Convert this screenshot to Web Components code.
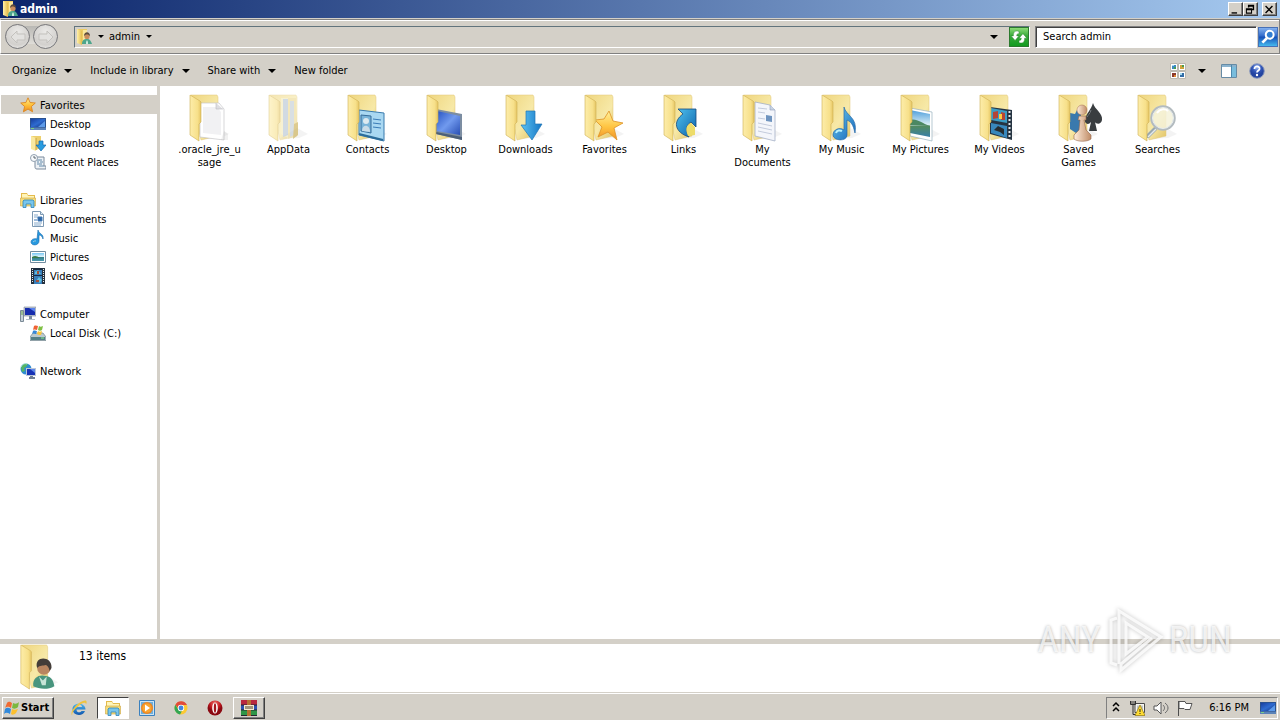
<!DOCTYPE html>
<html lang="en">
<head>
<meta charset="utf-8">
<title>admin</title>
<style>
  html, body { height: 100%; }
  body {
    margin: 0;
    overflow: hidden;
    font: 11px/13px "DejaVu Sans Condensed", "Noto Sans", sans-serif;
    color: #000;
    --face: #d4d0c8;
    --shade: #808080;
    --edge: #404040;
  }
</style>
</head>
<body>
<desktop-screen>
  <title-bar slot="window" icon="user">admin</title-bar>
  <address-bar slot="window" path="admin"></address-bar>
  <command-bar slot="window">
    <command-button menu>Organize</command-button>
    <command-button menu>Include in library</command-button>
    <command-button menu>Share with</command-button>
    <command-button>New folder</command-button>
  </command-bar>
  <explorer-body slot="window">
    <nav-group slot="nav">
      <nav-item icon="star" selected>Favorites</nav-item>
      <nav-item icon="desktop" child>Desktop</nav-item>
      <nav-item icon="downloads" child>Downloads</nav-item>
      <nav-item icon="recent" child>Recent Places</nav-item>
    </nav-group>
    <nav-group slot="nav">
      <nav-item icon="libraries">Libraries</nav-item>
      <nav-item icon="document" child>Documents</nav-item>
      <nav-item icon="music" child>Music</nav-item>
      <nav-item icon="picture" child>Pictures</nav-item>
      <nav-item icon="video" child>Videos</nav-item>
    </nav-group>
    <nav-group slot="nav">
      <nav-item icon="computer">Computer</nav-item>
      <nav-item icon="disk" child>Local Disk (C:)</nav-item>
    </nav-group>
    <nav-group slot="nav">
      <nav-item icon="network">Network</nav-item>
    </nav-group>
    <file-item kind="page">.oracle_jre_u<wbr>sage</file-item>
    <file-item kind="appdata">AppData</file-item>
    <file-item kind="contacts">Contacts</file-item>
    <file-item kind="desktop">Desktop</file-item>
    <file-item kind="downloads">Downloads</file-item>
    <file-item kind="favorites">Favorites</file-item>
    <file-item kind="links">Links</file-item>
    <file-item kind="documents">My Documents</file-item>
    <file-item kind="music">My Music</file-item>
    <file-item kind="pictures">My Pictures</file-item>
    <file-item kind="videos">My Videos</file-item>
    <file-item kind="games">Saved Games</file-item>
    <file-item kind="searches">Searches</file-item>
  </explorer-body>
  <details-pane slot="window">13 items</details-pane>
  <task-bar slot="taskbar">
    <task-button icon="ie" label="Internet Explorer"></task-button>
    <task-button icon="libraries" label="Windows Explorer" state="active"></task-button>
    <task-button icon="player" label="Media Player"></task-button>
    <task-button icon="chrome" label="Chrome"></task-button>
    <task-button icon="opera" label="Opera"></task-button>
    <task-button icon="winrar" label="WinRAR" state="open"></task-button>
    <system-tray slot="tray">6:16 PM</system-tray>
  </task-bar>
  <water-mark slot="overlay"></water-mark>
</desktop-screen>

<script>
// Small 16x16 icons
const ICONS = {
  user: `<linearGradient id="g"><stop stop-color="#fff0a8"/><stop offset="1" stop-color="#e2bb4c"/></linearGradient>
    <path d="M1 0h10v13l-5 2-5-2z" fill="#eccb62"/><path d="M1 0l5 2v14l-5-2z" fill="url(#g)"/><path d="M7 1h4v11H7z" fill="#f9e79c"/>
    <path d="M6 15c0-4 2-5 5-5s4 2 5 5z" fill="#4da58c"/><path d="M10 11l1 2 1-2v4h-2z" fill="#c9ebdc"/><circle cx="11" cy="7.500" r="2.600" fill="#c98d5e"/><path d="M8 7c0-5 6-5 6 0l-2-1.500-2 0z" fill="#5b4a3c"/>`,
  star: `<linearGradient id="g" x2="0" y2="1"><stop stop-color="#fff3a0"/><stop offset=".5" stop-color="#ffc33c"/><stop offset="1" stop-color="#ef8a1c"/></linearGradient>
    <path d="M8 .8l2.100 4.700 5.200.5-3.900 3.500 1.200 5.300L8 12.100l-4.600 2.700 1.200-5.300L.7 6l5.200-.5z" fill="url(#g)" stroke="#dc861e" stroke-width=".9"/>`,
  desktop: `<linearGradient id="g" x2="1" y2="1"><stop stop-color="#183f9f"/><stop offset=".5" stop-color="#2e6bd0"/><stop offset="1" stop-color="#12307c"/></linearGradient>
    <path d="M0 2h16v12H0z" fill="#29518f"/><path d="M1 3h14v8H1z" fill="url(#g)"/><path d="M8 11l7-6v6z" fill="#5d9bea"/><path d="M0 11.500h16V14H0z" fill="#5b83b8"/><path d="M1 12h3v1H1z" fill="#7bd085"/>`,
  downloads: `<path d="M1 1h10v12l-5 2-5-2z" fill="#edd06e"/><path d="M1 1l5 2v13l-5-2z" fill="#fae9a0"/><path d="M6 3v12" stroke="#c89f3e"/>
    <path d="M9 6h4v4h3l-5 6-5-6h3z" fill="#299ce0" stroke="#1968ae" stroke-width=".7"/>`,
  recent: `<path d="M5 3h9v9h2v3H7c-2 0-2-1-2-3z" fill="#edf1f5" stroke="#7b8a9c"/><path d="M7 6h5M7 8h2m1 0h3M7 10h5M9 12h5" stroke="#638aaa"/>
    <circle cx="4" cy="4" r="3.500" fill="#f7f9fb" stroke="#91a0af"/><path d="M4 2v2h2" fill="none" stroke="#59656f"/>`,
  libraries: `<path d="M1 1h6l1 2h7v11H1z" fill="#e4bb4d"/><path d="M2 2h5l1 2h6v4H2z" fill="#fff5b9"/><path d="M.5 6h15v8H.5z" fill="#f6dc78" stroke="#cda542" stroke-width=".6"/>
    <path d="M3 15.500V9l1-1h9l1 1v6.500h-3V12H6v3.500z" fill="#79c6ec" stroke="#3184b8" stroke-width=".8"/>`,
  document: `<path d="M2.500.5h8l3 3v12h-11z" fill="#fff" stroke="#7d99b3"/><path d="M10.500.5v3h3" fill="#dce9f4" stroke="#7d99b3"/><path d="M4 4h4M4 6h4M4 12h8M4 14h7" stroke="#86a9ca"/><path d="M4 9h3M8 6h4v4H8z" stroke="#3a74b4" fill="#2f66a3"/>`,
  music: `<path d="M8 0c1 4 6 4 5 9-1-3-2-4-4-4v6c0 5-8 5-8 1 0-3 4-4 6-3z" fill="#2799df" stroke="#176aad" stroke-width=".6"/><path d="M3 12c1-1 2-1 3-1" stroke="#a5e0fb"/>`,
  picture: `<linearGradient id="g" x2="0" y2="1"><stop stop-color="#76c7f4"/><stop offset=".5" stop-color="#e9f7fb"/><stop offset=".51" stop-color="#317d83"/><stop offset="1" stop-color="#4b9ab3"/></linearGradient>
    <path d="M.5 2.500h15v11H.5z" fill="#fff" stroke="#728da0"/><path d="M2 4h12v8H2z" fill="url(#g)"/><path d="M2 8c3-2 5-1 8 1H2z" fill="#397a48"/>`,
  video: `<path d="M1 0h14v16H1z" fill="#25313d"/><path d="M4 0h8v16H4z" fill="#397eba"/><path d="M4 0h8v2H4zM4 7h8v1H4z" fill="#182c41"/><path d="M5 4l3-2 3 4H5zM6 13l3-4 3 3-2 3z" fill="#5dc0df"/><path d="M7 3h2v3H7zM6 12h3v2H6z" fill="#a3523b"/>
    <path d="M2.500 1v14M13.500 1v14" stroke="#e3edf3" stroke-dasharray="1 1"/>`,
  computer: `<path d="M.5 4.500h3v11h-3z" fill="#c6d1d9" stroke="#7b8a96"/><path d="M1 6h2M1 8h2" stroke="#68a74a"/><path d="M4 1h12v9H4z" fill="#c2cbd5" stroke="#7c8899" stroke-width=".6"/><path d="M5 2h10v7H5z" fill="#172dad"/><path d="M9 2h6v4z" fill="#5b83ed"/><path d="M9 10h3v3H9z" fill="#7b8ba0"/><path d="M6 13h9v1H6z" fill="#b5c0cb"/>`,
  disk: `<path d="M3 8h10l3 4v3.500H0V12z" fill="#bbc9cf" stroke="#71858e" stroke-width=".7"/><path d="M1 12h14v3H1z" fill="#557f86"/><path d="M11 13h3" stroke="#86eb8b"/>
    <path d="M4 1c2-1 3 0 4 0L7 5C6 5 5 4 3 5z" fill="#ef6334"/><path d="M9 1c1 1 2 1 4 0l-1 4c-1 1-3 1-4 0z" fill="#7fc044"/><path d="M3 6c1-1 3 0 4 0L6 9c-1 0-3-1-4 0z" fill="#3688d8"/><path d="M8 6c1 1 2 1 4 0l-1 4c-1 0-3 0-4-1z" fill="#fbc438"/>`,
  network: `<circle cx="6" cy="6" r="5.500" fill="#2e8bd2"/><path d="M1 4c2-4 5-4 7-3L6 4 4 5l1 3-3 1zM7 6l4-1-1 4-3 2z" fill="#55b564"/><path d="M1 4c1-3 4-4 6-3" stroke="#b8e8ef" fill="none"/>
    <path d="M6 5h10v8H6z" fill="#bcc7d7"/><path d="M7 6h8v6H7z" fill="#1732b6"/><path d="M10 6h5v4z" fill="#5d87e9"/><path d="M10 13h3v1h2v2H9v-2h1z" fill="#718094"/>`,
  refresh: `<linearGradient id="g" x2="0" y2="1"><stop stop-color="#8cdb77"/><stop offset=".45" stop-color="#37aa38"/><stop offset="1" stop-color="#129b20"/></linearGradient><path d="M0 0h16v16H0z" fill="url(#g)"/>
    <path d="M8 3C4 2 3 4 3 7H1l3.500 4L8 7H6c0-1 0-2 2-2zM8 13c4 1 5-1 5-4h2l-3.500-4L8 9h2c0 1 0 2-2 2z" fill="#fff" stroke="#25802a" stroke-width=".4"/>`,
  search: `<linearGradient id="g" x2="0" y2="1"><stop stop-color="#82b0ef"/><stop offset=".45" stop-color="#2f6acb"/><stop offset=".5" stop-color="#164fb7"/><stop offset="1" stop-color="#45b9ee"/></linearGradient><path d="M0 0h16v16H0z" fill="url(#g)"/>
    <path d="M7 9l-4 4" stroke="#fff" stroke-width="2.500"/><circle cx="9.500" cy="6" r="3.500" fill="#317dd1" stroke="#fff" stroke-width="1.800"/>`,
  views: `<path d="M.5.5h7v7h-7zM8.500.5h7v7h-7zM.5 8.500h7v7h-7zM8.500 8.500h7v7h-7z" fill="#fff" stroke="#bcb8af"/><path d="M2 2h4v4H2z" fill="#3c8bc2"/><path d="M10 2h4v4h-4z" fill="#cfa33b"/><path d="M2 10h4v4H2z" fill="#8b3a2c"/><path d="M10 10h4v4h-4z" fill="#326ca6"/><path d="M4 4h2v2H4zM12 2h2v2h-2z" fill="#4b9d4e"/><path d="M4 12h2v2H4z" fill="#e58b34"/><path d="M2 2h2v1H2zM10 10h2v2h-2z" fill="#a4d8ef"/>`,
  pane: `<path d="M.5 1.500h15v13H.5z" fill="#fff" stroke="#668ba5"/><path d="M1 2h14v2H1z" fill="#8bb3ce"/><path d="M10 4h5v10h-5z" fill="#79bddd"/><path d="M10.500 2v12" stroke="#4c88ad"/>`,
  help: `<radialGradient id="g" cy=".25"><stop stop-color="#a3bff5"/><stop offset=".6" stop-color="#3458b9"/><stop offset="1" stop-color="#2444a0"/></radialGradient><circle cx="8" cy="8" r="7.300" fill="url(#g)" stroke="#8d9bbd"/>
    <path d="M5.500 6c0-4 5.500-3 5 0-.3 1.500-2.500 1.500-2.500 3.500" fill="none" stroke="#fff" stroke-width="1.800"/><circle cx="8" cy="12" r="1.200" fill="#fff"/>`,
  windows: `<path d="M3 3c2-2 3-1 5 0L7 8C5 7 4 6 1 8z" fill="#f06b32"/><path d="M9 3c2 1 4 1 6-1l-1 5c-2 2-4 2-6 1z" fill="#7bb83e"/><path d="M1 9c2-2 4-1 6 0l-1 5c-2-1-4-2-6 0z" fill="#3189db"/><path d="M8 9c2 1 3 1 6 0l-2 4c-2 2-4 2-5 1z" fill="#fcc02f"/>`,
  ie: `<linearGradient id="g" x2="0" y2="1"><stop stop-color="#4db8ef"/><stop offset="1" stop-color="#0f55ad"/></linearGradient><path d="M14.500 9.500H5.500c0 3.500 4 3.500 5 1.500h3.500C12 17 1.500 16 1.500 9S14.500 2 14.500 9.500zM11 7C11 4 6 4 5.500 7z" fill="url(#g)"/><path d="M1 15.500C-2 11 8 1 14 .5c2 0 2 2 1 4 0-3-4-2-8 2-4 3-6 6-6 9z" fill="#efc33f"/>`,
  player: `<path d="M.5.5h15v15H.5z" fill="#c9e3f5" stroke="#3b81be"/><path d="M2 2h12v12H2z" fill="#6caedb"/><circle cx="8" cy="8" r="6" fill="#ef8721"/><circle cx="8" cy="8" r="4.500" fill="#f9a531"/><path d="M6 4.500l5 3.500-5 3.500z" fill="#fff"/>`,
  chrome: `<circle cx="8" cy="8" r="6.500" fill="#fbc934"/><path d="M2.400 4.700A6.500 6.500 0 0 1 14 5H8a3 3 0 0 0-3 3z" fill="#e14b3b"/><path d="M2.400 4.700l3 5A3 3 0 0 0 9 11l-2 3.500A6.500 6.500 0 0 1 2.400 4.700z" fill="#33a653"/><circle cx="8" cy="8" r="3.200" fill="#fff"/><circle cx="8" cy="8" r="2.400" fill="#4285df"/>`,
  opera: `<radialGradient id="g" cy=".2"><stop stop-color="#ed7670"/><stop offset=".7" stop-color="#c2161e"/><stop offset="1" stop-color="#8b0912"/></radialGradient><circle cx="8" cy="8" r="7.500" fill="url(#g)"/><ellipse cx="8" cy="8" rx="2.800" ry="5.500" fill="#fff"/><ellipse cx="8" cy="8" rx="1.200" ry="4.800" fill="#a4161d"/>`,
  winrar: `<path d="M0 0h16v5H0z" fill="#b8283f"/><path d="M0 5h16v5H0z" fill="#2e51b0"/><path d="M0 10h16v6H0z" fill="#2e9546"/><path d="M0 5h16M0 10h16M0 15.500h16" stroke="#242430"/><path d="M6 0h4v5H6zM6 10h4v6H6z" fill="#b57132"/><path d="M3 5h10v5H3z" fill="#f3ead0"/><path d="M5 6v3m2-3v3m2-3v3m2-3v3" stroke="#504029"/>`,
  tray_net: `<path d="M6 3.500h9.500v9H6z" fill="#f7f7f2" stroke="#4a4a4a"/><path d="M8 5.500h6v5H8z" fill="#c3c6c7"/><path d="M1.500 1v3.500h5V1M3 1v3m2-3v3M4 5v9.500h5" fill="none" stroke="#303030"/><path d="M11 5l5 10.500H6z" fill="#ffdc32" stroke="#947810" stroke-width=".7"/><path d="M11 9v3m0 1v1" stroke="#222"/>`,
  tray_sound: `<path d="M1 6h3l4-4v12l-4-4H1z" fill="#fff" stroke="#555"/><path d="M10 5c2 2 2 4 0 6M12 3c4 3 4 7 0 10" fill="none" stroke="#686868"/>`,
  tray_flag: `<path d="M1.500 1v15" stroke="#4d4d4d"/><path d="M2 1.500h6l1 2h6l-2 6H8l-1-1H2z" fill="#fff" stroke="#555"/>`,
  arrow_left: `<path d="M7 2L1 8l6 6v-3h8V5H7z" fill="#e3e2e0" stroke="#c3c1bd"/>`,
  arrow_right: `<path d="M9 2l6 6-6 6v-3H1V5h8z" fill="#e3e2e0" stroke="#c3c1bd"/>`,
  minimize: `<path d="M3 12h8v2H3z"/>`,
  restore: `<path d="M5 1h9v8h-3V7h1V4H7v1H5zM2 6h9v8H2zm1.500 3v3.500h6V9z" fill-rule="evenodd"/>`,
  close: `<path d="M3 3l10 10m0-10L3 13" stroke="#000" stroke-width="2"/>`,
  chevrons: `<path d="M5 6l3-3 3 3M5 11l3-3 3 3" fill="none" stroke="#000" stroke-width="1.500"/>`
};

// What sticks out of each 48x48 folder
const CONTENTS = {
  page: `<path d="M14 9h19l5 6v31l-24-3z" fill="#fff" stroke="#c5c5c8" stroke-width=".7"/><path d="M17 13h14l4 5v23l-18-2z" fill="#f1f1f3"/><path d="M30 9v6h7" fill="#dedee2" stroke="#b9b9c0" stroke-width=".6"/><path d="M35 46h7v-6l-4-3z" fill="#888" opacity=".12"/>`,
  appdata: `<path d="M16 4h7v40l-7-4z" fill="#f3e9b5"/><path d="M18 5h5v36l-5 2z" fill="#b4c3d0"/><path d="M23 4h8v38l-8 3z" fill="#ecd88e"/><path d="M25 7h4v34l-4 2z" fill="#c1cbd1"/><path d="M29 30l4-2v13l-5 4z" fill="#c9aa48"/>`,
  contacts: `<path d="M15 16l25 3v28l-25-6z" fill="#a9d8f2" stroke="#397bae"/><path d="M17 21l10 1v17l-10-2z" fill="#79b4d9" stroke="#376c99"/><circle cx="22" cy="27" r="3" fill="#dceaf0"/><path d="M18 37c0-7 8-7 8 1z" fill="#c9dce8"/><path d="M29 25l8 1M29 29l8 1M29 33l8 1" stroke="#397bb6"/><path d="M15 40l24 6" stroke="#2c6c9a" stroke-width="2"/>`,
  desktop: `<linearGradient id="s" x2="1" y2="1"><stop stop-color="#2854c2"/><stop offset=".5" stop-color="#719aee"/><stop offset="1" stop-color="#284eb4"/></linearGradient><path d="M13 15l26 5v26l-26-6z" fill="#7c8da2"/><path d="M14 17l23 5v19l-23-4z" fill="url(#s)"/><path d="M13 38l26 5v3l-26-6z" fill="#4c5f77"/>`,
  downloads: `<linearGradient id="s"><stop stop-color="#5bc2f2"/><stop offset="1" stop-color="#1676c5"/></linearGradient><path d="M24 17h9v13h7L30 46 19 31h5z" fill="url(#s)" stroke="#1f75b4" stroke-width=".7"/>`,
  favorites: `<linearGradient id="s" x2="0" y2="1"><stop stop-color="#fff19b"/><stop offset=".55" stop-color="#ffc441"/><stop offset="1" stop-color="#ef9128"/></linearGradient><path d="M28 17l4 10 10 2-9 5 3 12-9-8-10 5 4-10-7-7 9-1z" fill="url(#s)" stroke="#dd9226" stroke-width=".8"/>`,
  links: `<linearGradient id="s" x2="1" y2="1"><stop stop-color="#4fc1ee"/><stop offset="1" stop-color="#0c62aa"/></linearGradient><path d="M18 15h18v18l-5-5c-6 4-5 9-2 15-15-5-16-16-6-23z" fill="url(#s)" stroke="#174a7e" stroke-width=".8"/><path d="M28 42c-3-7-2-11 3-13l4 4v8z" fill="#eddc69"/>`,
  documents: `<path d="M16 8l15 3 5 5v31l-20-5z" fill="#f4f6fb" stroke="#a4b0c6" stroke-width=".8"/><path d="M19 14l9 1M19 18l7 1M19 24l7 1M19 29l14 3M19 33l14 3M19 37l14 3" stroke="#c3cbdc"/><path d="M27 21l6 1v6l-6-1z" fill="#6f94bf"/><path d="M31 11v5h5" fill="#c8d4e4" stroke="#91a0bd" stroke-width=".6"/>`,
  music: `<linearGradient id="s" x2="1" y2="1"><stop stop-color="#6dceef"/><stop offset="1" stop-color="#1564ba"/></linearGradient><path d="M26 13c2 9 14 10 11 26-2-9-4-11-8-13v15c0 7-14 6-14 0 0-6 7-8 11-5z" fill="url(#s)" stroke="#286ba9" stroke-width=".7"/><path d="M18 39c1-3 4-3 6-2" stroke="#bbf2fd" fill="none" stroke-width="2"/>`,
  pictures: `<linearGradient id="s" x2="0" y2="1"><stop stop-color="#4e9edb"/><stop offset=".55" stop-color="#dceff6"/><stop offset=".6" stop-color="#528b60"/><stop offset="1" stop-color="#397fa8"/></linearGradient><path d="M13 14l22 4v29l-22-5z" fill="#fff" stroke="#9ab1bf" stroke-width=".7"/><path d="M13 16l20 4v23l-20-4z" fill="url(#s)"/><path d="M13 26c7-2 11 3 20 6l-20-1z" fill="#4c8862"/>`,
  videos: `<path d="M14 13l22 3v30l-22-6z" fill="#263442"/><path d="M15 14l16 3v12l-16-3z" fill="#3b9cc4"/><path d="M15 29l16 3v12l-16-5z" fill="#3887bc"/><path d="M17 18l5-1v7l-5 1zM25 18l4 1v7h-4z" fill="#b54436"/><path d="M23 20h3v5h-3z" fill="#fbcb40"/><path d="M18 36l4-4 6 3v6l-4-3z" fill="#262d31"/><path d="M33.500 17v28" stroke="#e4e8eb" stroke-width="2" stroke-dasharray="2 2"/>`,
  games: `<path d="M15 19l5 1 2-4 4 3v18l-5 2-6-4z" fill="#3979ad"/><path d="M38 9c2 7 10 10 9 17-1 5-6 4-7 2l2 9h-8l2-9c-3 4-7 1-6-3 1-5 6-9 8-16z" fill="#393d40"/><path d="M36 16c-1 4-3 5-4 7" stroke="#777d80"/><linearGradient id="s"><stop stop-color="#ffeedd"/><stop offset="1" stop-color="#c08c67"/></linearGradient><path d="M24 22h7v4h-2l2 10 5 5v4c-4 3-13 3-17 0v-4l5-5 1-10h-2z" fill="url(#s)" stroke="#93664b" stroke-width=".6"/><circle cx="27" cy="16" r="5" fill="url(#s)" stroke="#a4714f" stroke-width=".5"/>`,
  searches: `<path d="M21 35l-7 7" stroke="#9aa8af" stroke-width="4" stroke-linecap="round"/><path d="M22 35l-8 8" stroke="#e3e9eb" stroke-width="1.500"/><circle cx="29" cy="24" r="11.500" fill="#f5f2db" fill-opacity=".85" stroke="#b3bbbf" stroke-width="2.500"/><circle cx="29" cy="24" r="10.500" fill="none" stroke="#e8edef"/><path d="M23 19c3-5 9-4 11-2" stroke="#fff" fill="none" stroke-width="2"/>`,
  user: `<path d="M17 44c-1-9 6-12 11-11 7 0 10 4 11 11-7 4-16 3-22 0z" fill="#48957e"/><path d="M23 34l4 4 4-4-1 9h-4z" fill="#c7e4d7"/><circle cx="28" cy="25" r="7" fill="#b98560"/><path d="M21 25c-4-13 16-13 15 0-1 2-2 3-2 3-1-4-2-5-4-6-3 1-6 0-9 3z" fill="#443d39"/>`
};

function folder(kind) {
  return `<svg viewBox="0 0 48 48" aria-hidden="true">
    <defs>
      <linearGradient id="back" x2="1" y2="1"><stop stop-color="#efd67f"/><stop offset=".6" stop-color="#f7e9a8"/><stop offset="1" stop-color="#e2c465"/></linearGradient>
      <linearGradient id="flap" x2="1"><stop stop-color="#fdedaa"/><stop offset=".7" stop-color="#f7e08a"/><stop offset="1" stop-color="#e6c665"/></linearGradient>
    </defs>
    <path d="M14 45l20-1 9-4-11-6z" fill="#888" opacity=".1"/>
    <g opacity="${kind === 'appdata' ? 0.6 : 1}">
      <path d="M5 1h26l1 2v39l-17 4z" fill="url(#back)" stroke="#e0c679" stroke-width=".5"/>
      ${CONTENTS[kind]}
      <path d="M4 1l10 6 1 1v20l-2 2v17L4 41z" fill="url(#flap)" stroke="#cfae52" stroke-width=".6"/>
    </g>
  </svg>`;
}

class BaseElement extends HTMLElement {
  constructor() {
    super();
    this.attachShadow({ mode: 'open' });
  }

  connectedCallback() {
    this.shadowRoot.innerHTML = this.render();
  }
}

class UiIcon extends BaseElement {
  render() {
    return `
      <style>
        :host { display: block; flex: none; width: 16px; height: 16px; }
        svg { display: block; width: 100%; height: 100%; }
      </style>
      <svg viewBox="0 0 16 16" aria-hidden="true">${ICONS[this.getAttribute('name')]}</svg>
    `;
  }
}

class DropArrow extends BaseElement {
  render() {
    return `
      <style>
        :host { display: block; flex: none; border: 4px solid transparent; border-top-color: #000; border-bottom: 0; }
        :host([small]) { border-width: 3px; border-bottom: 0; }
      </style>
    `;
  }
}

class FolderIcon extends BaseElement {
  render() {
    return `
      <style>
        :host { display: block; flex: none; width: 48px; height: 48px; }
        svg { display: block; width: 100%; height: 100%; }
      </style>
      ${folder(this.getAttribute('kind'))}
    `;
  }
}

class DesktopScreen extends BaseElement {
  render() {
    return `
      <style>
        :host { display: flex; flex-direction: column; position: relative; height: 100vh; background: var(--face); }
        main { flex: 1; min-height: 0; display: flex; flex-direction: column; }
      </style>
      <main><slot name="window"></slot></main>
      <slot name="taskbar"></slot>
      <slot name="overlay"></slot>
    `;
  }
}

class TitleBar extends BaseElement {
  render() {
    return `
      <style>
        :host { display: flex; align-items: center; height: 18px; padding: 0 3px 0 2px; background: linear-gradient(90deg, #0a246a, #a6caf0); color: #fff; }
        h1 { flex: 1; margin: 0 0 0 2px; font-size: 12px; line-height: 16px; font-weight: bold; }
        button { width: 15px; height: 14px; padding: 0; background: var(--face); border: 1px solid; border-color: #fff var(--edge) var(--edge) #fff; box-shadow: inset -1px -1px var(--shade); }
        button ui-icon { width: 12px; height: 11px; }
        .close { margin-left: 4px; }
      </style>
      <ui-icon name="${this.getAttribute('icon')}"></ui-icon>
      <h1><slot></slot></h1>
      <button aria-label="Minimize"><ui-icon name="minimize"></ui-icon></button>
      <button aria-label="Restore"><ui-icon name="restore"></ui-icon></button>
      <button class="close" aria-label="Close"><ui-icon name="close"></ui-icon></button>
    `;
  }
}

class AddressBar extends BaseElement {
  render() {
    return `
      <style>
        :host { display: flex; align-items: center; height: 33px; margin-top: 1px; padding: 0 1px 0 4px; border: 1px solid var(--shade); border-left-color: #fff; box-shadow: 0 1px #fff, inset 0 1px #fff; }
        button { padding: 0; border: 0; background: none; font: inherit; }
        .history { display: flex; gap: 3px; margin-right: 16px; background: linear-gradient(transparent 2px, #b9b8b4 2px, #dfddd8 20px, transparent 20px); border-radius: 13px; }
        .history button { display: grid; place-items: center; width: 25px; height: 25px; border: 1px solid #77777a; border-radius: 50%; background: radial-gradient(circle at 50% 30%, #ebeae8, #d2d0cd 65%, #f6f6f5); }
        .path { flex: 1; display: flex; align-items: center; gap: 5px; height: 20px; padding-left: 1px; border: 1px solid; border-color: #62747c #fff #fff #62747c; }
        .path > drop-arrow { margin-left: 1px; }
        .crumb { display: flex; align-items: center; gap: 6px; }
        .recent { margin-left: auto; width: 20px; display: grid; place-items: center; }
        .refresh { border: 1px solid #2c7a2e; }
        .refresh ui-icon, .go ui-icon { width: 18px; height: 18px; }
        input { box-sizing: border-box; width: 222px; height: 22px; margin: 0 1px 0 5px; padding: 0 7px; border: 1px solid; border-color: var(--shade) #fff #fff var(--shade); box-shadow: inset 1px 1px var(--edge); border-radius: 0; background: #fff; color: #000; font: inherit; outline: 0; }
        input::placeholder { color: #000; opacity: 1; }
        .go { border: 1px solid #4770b5; }
      </style>
      <div class="history">
        <button aria-label="Back"><ui-icon name="arrow_left"></ui-icon></button>
        <button aria-label="Forward"><ui-icon name="arrow_right"></ui-icon></button>
      </div>
      <div class="path">
        <ui-icon name="user"></ui-icon>
        <drop-arrow small></drop-arrow>
        <button class="crumb">${this.getAttribute('path')}<drop-arrow small></drop-arrow></button>
        <button class="recent" aria-label="Previous locations"><drop-arrow></drop-arrow></button>
        <button class="refresh" aria-label="Refresh"><ui-icon name="refresh"></ui-icon></button>
      </div>
      <input type="text" aria-label="Search" placeholder="Search ${this.getAttribute('path')}">
      <button class="go" aria-label="Go"><ui-icon name="search"></ui-icon></button>
    `;
  }
}

class CommandButton extends BaseElement {
  render() {
    return `
      <style>
        :host { display: block; }
        button { display: flex; align-items: center; gap: 8px; height: 24px; padding: 0 9px; border: 0; background: none; font: inherit; color: inherit; }
      </style>
      <button><slot></slot>${this.hasAttribute('menu') ? '<drop-arrow></drop-arrow>' : ''}</button>
    `;
  }
}

class CommandBar extends BaseElement {
  render() {
    return `
      <style>
        :host { display: flex; align-items: center; height: 31px; padding: 1px 15px 0 3px; }
        .tools { display: flex; align-items: center; margin-left: auto; gap: 12px; }
        button { padding: 0; border: 0; background: none; }
        .pane { margin-left: 3px; }
      </style>
      <slot></slot>
      <div class="tools">
        <button aria-label="Change view"><ui-icon name="views"></ui-icon></button>
        <button aria-label="More views"><drop-arrow></drop-arrow></button>
        <button class="pane" aria-label="Preview pane"><ui-icon name="pane"></ui-icon></button>
        <button aria-label="Help"><ui-icon name="help"></ui-icon></button>
      </div>
    `;
  }
}

class ExplorerBody extends BaseElement {
  render() {
    return `
      <style>
        :host { flex: 1; min-height: 0; display: flex; background: #fff; border-bottom: 5px solid var(--face); }
        nav { flex: none; box-sizing: border-box; width: 160px; padding: 9px 0 0 1px; border-right: 3px solid var(--face); display: flex; flex-direction: column; gap: 19px; }
        section { flex: 1; display: grid; grid-template-columns: repeat(auto-fill, 79px); align-content: start; padding: 8px 0 0 10px; }
      </style>
      <nav aria-label="Places"><slot name="nav"></slot></nav>
      <section aria-label="Files"><slot></slot></section>
    `;
  }
}

class NavGroup extends BaseElement {
  render() {
    return `
      <style>:host { display: block; }</style>
      <slot></slot>
    `;
  }
}

class NavItem extends BaseElement {
  render() {
    return `
      <style>
        :host { display: block; }
        a { display: flex; align-items: center; gap: 4px; height: 19px; padding-left: 19px; color: inherit; text-decoration: none; }
        span { padding-top: 2px; }
        :host([child]) a { padding-left: 29px; }
        :host([selected]) a { background: var(--face); }
      </style>
      <a href="#"><ui-icon name="${this.getAttribute('icon')}"></ui-icon><span><slot></slot></span></a>
    `;
  }
}

class FileItem extends BaseElement {
  render() {
    return `
      <style>
        :host { display: block; }
        a { display: flex; flex-direction: column; align-items: center; gap: 1px; color: inherit; text-decoration: none; text-align: center; }
        span { width: 66px; }
      </style>
      <a href="#"><folder-icon kind="${this.getAttribute('kind')}"></folder-icon><span><slot></slot></span></a>
    `;
  }
}

class DetailsPane extends BaseElement {
  render() {
    return `
      <style>
        :host { display: flex; gap: 15px; height: 48px; padding-left: 16px; background: #fff; border-bottom: 1px solid var(--face); }
        p { margin: 4px 0 0; font-size: 12px; line-height: 16px; }
        folder-icon { height: 46px; }
      </style>
      <folder-icon kind="user"></folder-icon>
      <p><slot></slot></p>
    `;
  }
}

class TaskButton extends BaseElement {
  render() {
    return `
      <style>
        :host { display: block; }
        button { box-sizing: border-box; display: grid; place-items: center; width: 32px; height: 22px; padding: 0; border: 1px solid transparent; background: none; }
        :host([state=active]) button { background: #fff; border-color: var(--edge) #fff #fff var(--edge); }
        :host([state=open]) button { border-color: #fff var(--edge) var(--edge) #fff; box-shadow: inset -1px -1px var(--shade); }
      </style>
      <button aria-label="${this.getAttribute('label')}"><ui-icon name="${this.getAttribute('icon')}"></ui-icon></button>
    `;
  }
}

class SystemTray extends BaseElement {
  render() {
    return `
      <style>
        :host { display: flex; align-items: center; gap: 8px; box-sizing: border-box; height: 22px; padding: 0 1px; border: 1px solid; border-color: var(--shade) #fff #fff var(--shade); }
        button { padding: 0; border: 0; background: none; }
        .more { margin-right: -3px; }
        time { margin: 0 3px 0 8px; }
      </style>
      <button class="more" aria-label="Show hidden icons"><ui-icon name="chevrons"></ui-icon></button>
      <ui-icon name="tray_net"></ui-icon>
      <ui-icon name="tray_sound"></ui-icon>
      <ui-icon name="tray_flag"></ui-icon>
      <time><slot></slot></time>
      <button aria-label="Show desktop"><ui-icon name="desktop"></ui-icon></button>
    `;
  }
}

class TaskBar extends BaseElement {
  render() {
    return `
      <style>
        :host { display: flex; align-items: center; height: 25px; padding: 1px 2px 0; background: var(--face); border-top: 1px solid #fff; }
        .start { box-sizing: border-box; display: flex; align-items: center; gap: 1px; width: 52px; height: 22px; margin-right: 9px; padding: 0 1px; border: 1px solid; border-color: #fff var(--edge) var(--edge) #fff; box-shadow: inset -1px -1px var(--shade); background: none; font: inherit; font-weight: bold; color: inherit; }
        .tasks { display: flex; gap: 2px; }
        .tray { margin-left: auto; }
      </style>
      <button class="start"><ui-icon name="windows"></ui-icon>Start</button>
      <div class="tasks"><slot></slot></div>
      <div class="tray"><slot name="tray"></slot></div>
    `;
  }
}

class WaterMark extends BaseElement {
  render() {
    return `
      <style>
        :host { position: absolute; right: 48px; bottom: 46px; display: flex; align-items: center; gap: 4px; pointer-events: none; font: 37px/40px "Roboto Condensed", Roboto, sans-serif; color: rgba(255, 255, 255, .75); text-shadow: 0 0 3px rgba(0, 0, 0, .3); }
        svg { display: block; width: 60px; height: 68px; filter: drop-shadow(0 0 2px rgba(0, 0, 0, .3)); }
      </style>
      <span>ANY</span>
      <svg viewBox="0 0 60 68" fill="none" stroke="#fff" stroke-opacity=".8" stroke-width="3" aria-hidden="true">
        <path d="M12 12l-6 2v43l6 2"/>
        <path d="M14 58V5l42 26-40 33v-6l31-26"/>
        <path d="M21 17v31l22-17z"/>
      </svg>
      <span>RUN</span>
    `;
  }
}

customElements.define('ui-icon', UiIcon);
customElements.define('drop-arrow', DropArrow);
customElements.define('folder-icon', FolderIcon);
customElements.define('desktop-screen', DesktopScreen);
customElements.define('title-bar', TitleBar);
customElements.define('address-bar', AddressBar);
customElements.define('command-button', CommandButton);
customElements.define('command-bar', CommandBar);
customElements.define('explorer-body', ExplorerBody);
customElements.define('nav-group', NavGroup);
customElements.define('nav-item', NavItem);
customElements.define('file-item', FileItem);
customElements.define('details-pane', DetailsPane);
customElements.define('task-button', TaskButton);
customElements.define('system-tray', SystemTray);
customElements.define('task-bar', TaskBar);
customElements.define('water-mark', WaterMark);
</script>
</body>
</html>
